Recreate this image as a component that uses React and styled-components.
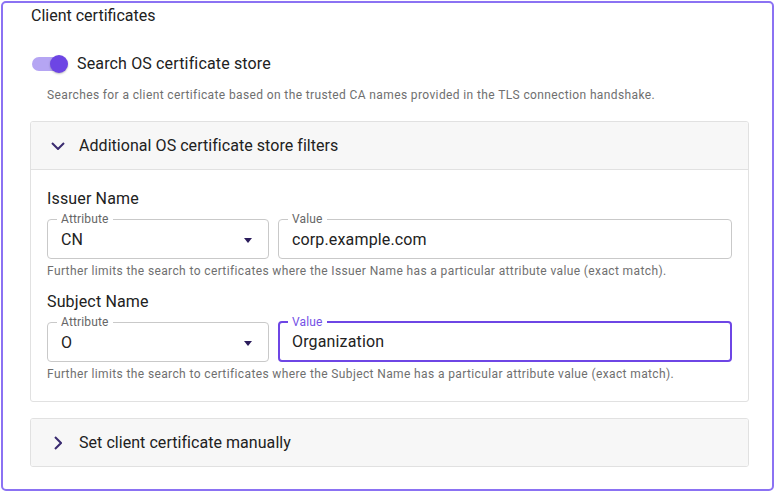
import styled, { createGlobalStyle } from "styled-components";

const GlobalStyle = createGlobalStyle`
  * { box-sizing: border-box; }
  body {
    margin: 0;
    font-family: Roboto, "Liberation Sans", sans-serif;
    letter-spacing: 0.15px;
    color: #212121;
    background: #ffffff;
  }
`;

const Frame = styled.div`
  margin: 1px;
  height: 490px;
  border: 2px solid #8b72f3;
  border-radius: 5px;
  padding: 1px 23px 0 27px;
`;

const Heading = styled.div`
  font-size: 16px;
  line-height: 24px;
  letter-spacing: 0;
  padding-left: 1px;
`;

const ToggleRow = styled.label`
  display: flex;
  align-items: center;
  gap: 13px;
  margin-top: 24px;
  padding-left: 2px;
  font-size: 16px;
  line-height: 24px;
`;

const Track = styled.span`
  position: relative;
  width: 32px;
  height: 14px;
  border-radius: 7px;
  background: #b5a5f3;
  flex: none;
`;

const Thumb = styled.span`
  position: absolute;
  top: -2px;
  right: -4px;
  width: 18px;
  height: 18px;
  border-radius: 50%;
  background: #6d45e4;
  box-shadow: 0 1px 2px rgba(0, 0, 0, 0.25);
`;

const Helper = styled.div`
  font-size: 12px;
  line-height: 16px;
  letter-spacing: 0.38px;
  color: #6f6f6f;
  padding-left: ${(p) => p.$indent || 0}px;
  margin-top: ${(p) => p.$top || 0}px;
`;

const Accordion = styled.section`
  border: 1px solid #e1e1e1;
  border-radius: 3px;
  margin-top: ${(p) => p.$top}px;
  overflow: hidden;
`;

const AccordionHeader = styled.div`
  display: flex;
  align-items: center;
  height: ${(p) => (p.$open ? 48 : 47)}px;
  padding-left: 20px;
  gap: 14px;
  background: #f7f7f7;
  font-size: 16px;
  letter-spacing: 0.05px;
  border-bottom: ${(p) => (p.$open ? "1px solid #e1e1e1" : "none")};
`;

const ChevronBox = styled.span`
  width: 14px;
  display: flex;
  justify-content: center;
  color: #3a2b70;
`;

const AccordionBody = styled.div`
  padding: 17px 16px 19px;
`;

const GroupLabel = styled.div`
  font-size: 16px;
  line-height: 24px;
  margin-top: ${(p) => p.$top || 0}px;
`;

const FieldRow = styled.div`
  display: flex;
  gap: 9px;
  margin-top: 1px;
`;

const Field = styled.fieldset`
  margin: 0;
  min-width: 0;
  width: ${(p) => (p.$width ? `${p.$width}px` : "auto")};
  flex: ${(p) => (p.$width ? "none" : "1")};
  border: ${(p) => (p.$focused ? "2px solid #6e46e5" : "1px solid #c9c9c9")};
  border-radius: 4px;
  padding: ${(p) => (p.$focused ? "0 12px 7px 12px" : "0 13px 8px 13px")};
`;

const Legend = styled.legend`
  font-size: 12px;
  line-height: 14px;
  padding: 0 4px;
  margin-left: -4px;
  color: ${(p) => (p.$focused ? "#7552e6" : "#666666")};
`;

const Control = styled.div`
  display: flex;
  align-items: center;
  justify-content: space-between;
  height: 20px;
  margin-top: ${(p) => (p.$focused ? 3 : 4)}px;
  font-size: 16px;
  line-height: 20px;
  color: #222222;
`;

const Caret = styled.span`
  width: 0;
  height: 0;
  margin-right: 3px;
  border-left: 4.5px solid transparent;
  border-right: 4.5px solid transparent;
  border-top: 5px solid #2b1d5c;
`;

const ChevronDown = () => (
  <svg width="14" height="8" viewBox="0 0 14 8" fill="none">
    <path d="M1 1l6 6 6-6" stroke="currentColor" strokeWidth="2" />
  </svg>
);

const ChevronRight = () => (
  <svg width="8" height="14" viewBox="0 0 8 14" fill="none">
    <path d="M1 1l6 6-6 6" stroke="currentColor" strokeWidth="2" />
  </svg>
);

const SelectField = ({ label, value }) => (
  <Field $width={222}>
    <Legend>{label}</Legend>
    <Control>
      <span>{value}</span>
      <Caret />
    </Control>
  </Field>
);

const TextField = ({ label, value, focused }) => (
  <Field $focused={focused}>
    <Legend $focused={focused}>{label}</Legend>
    <Control $focused={focused}>{value}</Control>
  </Field>
);

const NameFilter = ({ title, attr, value, focused, top }) => (
  <>
    <GroupLabel $top={top}>{title}</GroupLabel>
    <FieldRow>
      <SelectField label="Attribute" value={attr} />
      <TextField label="Value" value={value} focused={focused} />
    </FieldRow>
    <Helper $top={4}>
      Further limits the search to certificates where the {title} has a particular attribute value (exact match).
    </Helper>
  </>
);

export default function App() {
  return (
    <>
      <GlobalStyle />
      <Frame>
        <Heading>Client certificates</Heading>
        <ToggleRow>
          <Track>
            <Thumb />
          </Track>
          Search OS certificate store
        </ToggleRow>
        <Helper $indent={17} $top={11}>
          Searches for a client certificate based on the trusted CA names provided in the TLS connection handshake.
        </Helper>

        <Accordion $top={18}>
          <AccordionHeader $open>
            <ChevronBox>
              <ChevronDown />
            </ChevronBox>
            Additional OS certificate store filters
          </AccordionHeader>
          <AccordionBody>
            <NameFilter title="Issuer Name" attr="CN" value="corp.example.com" />
            <NameFilter title="Subject Name" attr="O" value="Organization" focused top={11} />
          </AccordionBody>
        </Accordion>

        <Accordion $top={16}>
          <AccordionHeader>
            <ChevronBox>
              <ChevronRight />
            </ChevronBox>
            Set client certificate manually
          </AccordionHeader>
        </Accordion>
      </Frame>
    </>
  );
}
